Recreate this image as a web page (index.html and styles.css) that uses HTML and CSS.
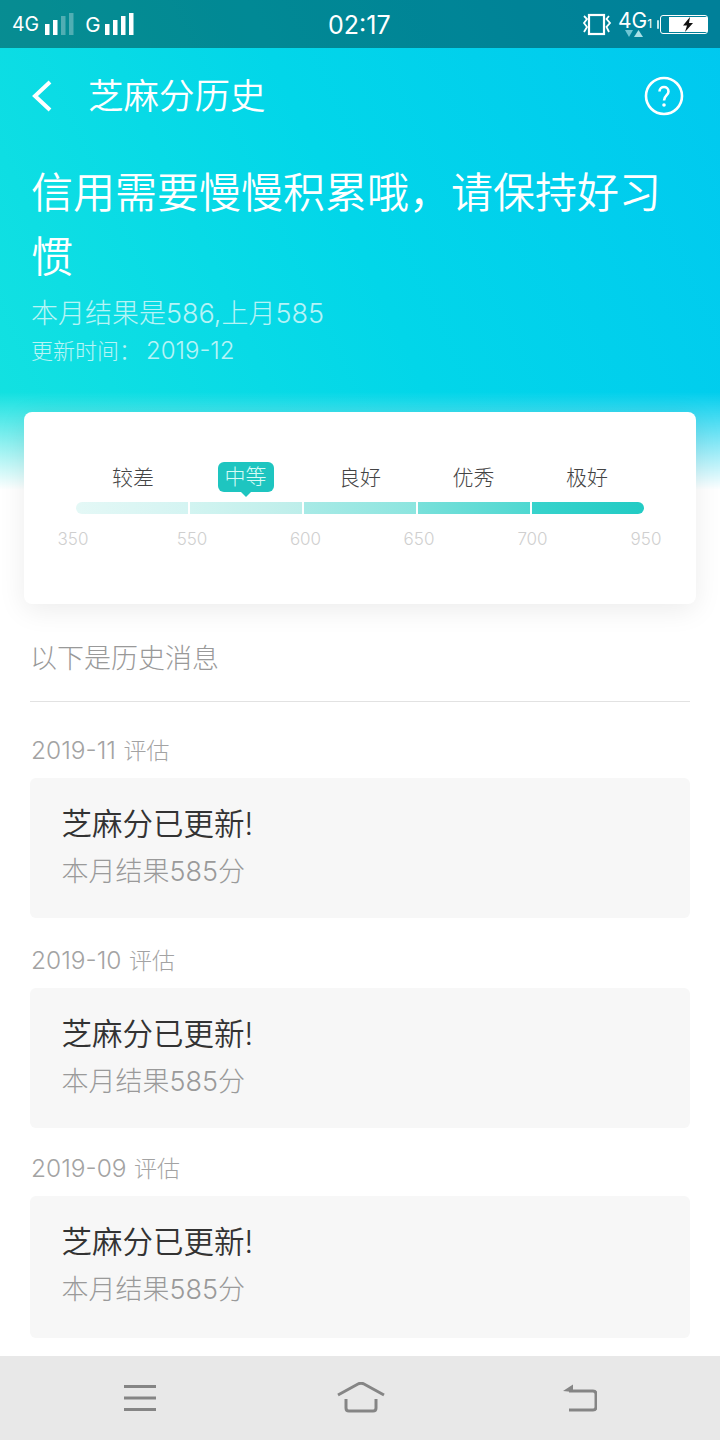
FILE: index.html
```html
<!DOCTYPE html>
<html lang="zh-CN">
<head>
<meta charset="UTF-8">
<title>芝麻分历史</title>
<link rel="stylesheet" href="styles.css">
</head>
<body>
<div class="page">
	<div class="hero">
		<div class="status">
			<div class="status-left">
				<span class="net">4G</span>
				<svg class="bars" width="30" height="24" viewBox="0 0 30 24"><rect x="0" y="12" width="4.500" height="11" fill="#fff"/><rect x="8" y="8" width="4.500" height="15" fill="#fff"/><rect x="16" y="4" width="4.500" height="19" fill="#fff" opacity=".3"/><rect x="24" y="1" width="4.500" height="22" fill="#fff" opacity=".3"/></svg>
				<span class="net net-g">G</span>
				<svg class="bars" width="30" height="24" viewBox="0 0 30 24"><rect x="0" y="12" width="4.500" height="11" fill="#fff"/><rect x="8" y="8" width="4.500" height="15" fill="#fff"/><rect x="16" y="4" width="4.500" height="19" fill="#fff"/><rect x="24" y="1" width="4.500" height="22" fill="#fff"/></svg>
			</div>
			<div class="clock">02:17</div>
			<div class="status-right">
				<svg width="30" height="24" viewBox="0 0 30 24" fill="none" stroke="#fff"><rect x="7" y="3" width="15" height="19" stroke-width="2.200"/><path d="M2 4 L5 7 L2 11 L5 15 L2 20 M27 4 L24.500 7 L28 11 L24.500 15 L27 20" stroke-width="1.800"/></svg>
				<div class="sim"><span class="sim-big">4G</span><span class="sim-num">1</span>
					<svg class="sim-arrows" width="18" height="8" viewBox="0 0 18 8"><path d="M0 0 H8 L4 7 Z" fill="#6fc6d4"/><path d="M9 7 H18 L13.500 0 Z" fill="#a8dfe6"/></svg>
				</div>
				<div class="battery"><div class="battery-fill"><svg width="12" height="15" viewBox="0 0 12 15"><path d="M8 0 L1 8.500 H5 L3 15 L11 6 H7 Z" fill="#111"/></svg></div></div>
			</div>
		</div>
		<div class="nav">
			<svg class="back" width="24" height="32" viewBox="0 0 24 32" fill="none" stroke="#fff" stroke-width="4"><path d="M20 2 L5 16 L20 30"/></svg>
			<div class="nav-title">芝麻分历史</div>
			<svg class="help" width="40" height="40" viewBox="0 0 40 40" fill="none" stroke="#fff"><circle cx="20" cy="20" r="18" stroke-width="2.600"/><path d="M15.500 15.500 C15.500 9.500 24.500 9.500 24.500 15.500 C24.500 19.500 20 19.500 20 24.500" stroke-width="2.600"/><circle cx="20" cy="29" r="1.800" fill="#fff" stroke="none"/></svg>
		</div>
		<div class="slogan">信用需要慢慢积累哦，请保持好习惯</div>
		<div class="result">本月结果是586,上月585</div>
		<div class="updated">更新时间：<span class="num">2019-12</span></div>
	</div>

	<div class="card">
		<div class="levels">
			<span>较差</span>
			<span class="level-on">中等</span>
			<span>良好</span>
			<span>优秀</span>
			<span>极好</span>
		</div>
		<div class="bar">
			<i class="s1"></i><i class="s2"></i><i class="s3"></i><i class="s4"></i><i class="s5"></i>
		</div>
		<div class="scale">
			<span>350</span><span>550</span><span>600</span><span>650</span><span>700</span><span>950</span>
		</div>
	</div>

	<div class="list">
		<div class="list-title">以下是历史消息</div>
		<div class="month"><span class="num">2019-11</span> 评估</div>
		<div class="msg">
			<div class="msg-title">芝麻分已更新!</div>
			<div class="msg-text">本月结果585分</div>
		</div>
		<div class="month"><span class="num">2019-10</span> 评估</div>
		<div class="msg">
			<div class="msg-title">芝麻分已更新!</div>
			<div class="msg-text">本月结果585分</div>
		</div>
		<div class="month month-last"><span class="num">2019-09</span> 评估</div>
		<div class="msg msg-last">
			<div class="msg-title">芝麻分已更新!</div>
			<div class="msg-text">本月结果585分</div>
		</div>
	</div>

	<div class="softkeys">
		<svg width="34" height="28" viewBox="0 0 34 28" fill="none" stroke="#858585" stroke-width="3"><path d="M0 2.500 H32 M0 14 H32 M0 25.500 H32"/></svg>
		<svg width="48" height="32" viewBox="0 0 48 32" fill="none" stroke="#858585" stroke-width="3"><path d="M1 13 L21 2 Q24 .5 27 2 L47 13"/><path d="M9 17 V26 Q9 29 12 29 H36 Q39 29 39 26 V17"/></svg>
		<svg width="34" height="30" viewBox="0 0 34 30" fill="none" stroke="#858585" stroke-width="3"><path d="M6 8 H30 Q33 8 33 11 V24 Q33 27 30 27 H6"/><path d="M0 8 L10 1.500 V9 Z" fill="#858585" stroke="none"/></svg>
	</div>
</div>
</body>
</html>
```

FILE: styles.css
```css
html,body,div,span { margin:0; padding:0; }
html,body { width:100%; height:100%; }
body { background:#fff; font-family:Inter,"Noto Sans CJK SC",sans-serif; font-weight:300; }

.page { width:720px; height:1440px; position:relative; overflow:hidden; display:flex; flex-direction:column; }

/* top part, fades out under the card */
.hero { height:490px; flex:none; color:#fff; box-sizing:border-box; background:linear-gradient(180deg,rgba(255,255,255,0) 0,rgba(255,255,255,0) 392px,#fff 490px),linear-gradient(65deg,#14e2e0 0%,#02d6e9 50%,#00c8f0 100%); }

.status { height:48px; background:rgba(0,0,0,.36); display:flex; align-items:center; justify-content:space-between; padding:0 12px; position:relative; }
.status-left { display:flex; align-items:center; font-weight:400; }
.net { font-size:19.500px; margin-right:6px; }
.net-g { font-size:20.500px; margin-left:10px; margin-right:5px; }
.bars { display:block; }
.clock { font-size:25px; position:absolute; left:328px; top:10px; font-weight:400; }
.status-right { display:flex; align-items:center; gap:6px; font-weight:400; }
.sim { position:relative; width:36px; height:36px; font-size:21px; line-height:30px; white-space:nowrap; }
.sim-num { font-size:12px; }
.sim-arrows { position:absolute; left:7px; top:24px; }
.battery { width:48px; height:19px; border:1px solid #fff; border-radius:3px; padding:1px 0 1px 8px; box-sizing:border-box; position:relative; }
.battery:before { content:""; position:absolute; left:-4px; top:4px; width:2px; height:9px; background:#bfe8ee; border-radius:1px; }
.battery-fill { height:100%; background:#fff; display:flex; align-items:center; justify-content:center; }

.nav { height:96px; display:flex; align-items:center; padding:0 36px 0 30px; }
.back { flex:none; }
.nav-title { font-size:35.500px; font-weight:350; margin:-6px 0 0 34px; flex:1; }

.slogan { font-size:42px; font-weight:350; line-height:64px; padding:0 31px; margin-top:17px; }
.result { font-size:27px; line-height:36px; padding:0 31px; margin-top:7px; opacity:.7; }
.updated { font-size:22px; line-height:32px; padding:0 31px; margin-top:3px; opacity:.7; }
.updated .num { font-size:24px; margin-left:5px; }

.card { position:absolute; left:24px; top:412px; width:672px; height:192px; background:#fff; border-radius:8px; box-shadow:0 6px 28px rgba(0,0,0,.08); }
.levels { display:flex; justify-content:space-between; padding:50px 88px 0; font-size:21px; line-height:32px; color:#444; }
.levels span { width:42px; text-align:center; white-space:nowrap; }
.level-on { width:56px !important; margin:0 -6px 0 -8px; background:#1ec5c0; color:#d8fbf6; border-radius:6px; position:relative; line-height:30px; height:30px; }
.level-on:after { content:""; position:absolute; left:50%; bottom:-5px; margin-left:-5px; border:5px solid transparent; border-bottom:0; border-top-color:#1ec5c0; }
.bar { display:flex; gap:2px; margin:8px 52px 0; height:12px; }
.bar i { flex:1; display:block; }
.s1 { background:linear-gradient(90deg,#e4f8f6,#d4f4f2); border-radius:6px 0 0 6px; }
.s2 { background:linear-gradient(90deg,#d2f4f1,#bdeeea); }
.s3 { background:linear-gradient(90deg,#a8eae6,#8ce5df); }
.s4 { background:linear-gradient(90deg,#78e0da,#4fd8d1); }
.s5 { background:linear-gradient(90deg,#38d3cc,#22cbc4); border-radius:0 6px 6px 0; }
.scale { display:flex; justify-content:space-between; padding:0 32px 0 31px; margin-top:12px; font-size:17px; line-height:26px; color:#cfcfcf; }
.scale span { width:36px; text-align:center; }
.scale span:first-child { margin-right:5.500px; }

.list { position:absolute; left:30px; right:30px; top:616px; }
.list-title { font-size:27px; padding-top:2px; line-height:82px; height:83px; color:#999; border-bottom:1px solid #e2e2e2; }
.month { font-size:23px; line-height:32px; height:32px; color:#a3a3a3; margin-top:26px; padding-left:1px; }
.month .num { font-size:24.500px; margin-right:1px; }
.list-title + .month { margin-top:32px; }
.month-last { margin-top:24px; }
.msg { margin-top:12px; height:140px; background:#f7f7f7; border-radius:6px; padding:26px 32px 0 31.500px; box-sizing:border-box; }
.msg-last { height:142px; }
.msg-title { font-size:30.500px; font-weight:350; line-height:40px; color:#333; }
.msg-text { font-size:27px; line-height:36px; color:#9a9a9a; margin-top:10px; }

.softkeys { position:absolute; left:0; right:0; bottom:0; height:84px; background:#e8e8e8; display:flex; justify-content:space-between; align-items:center; padding:0 123px 0 124px; }
```
